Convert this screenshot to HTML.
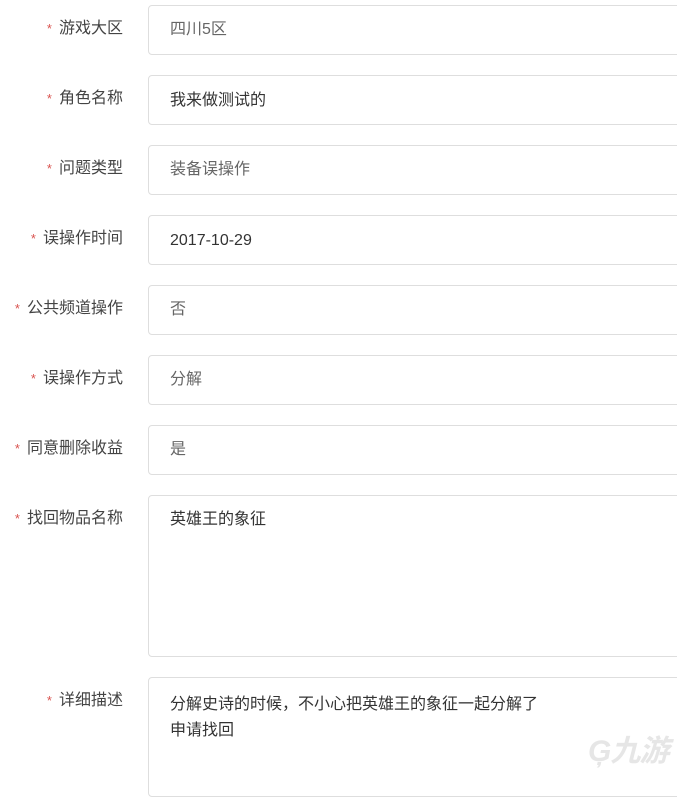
<!DOCTYPE html>
<html><head><meta charset="utf-8"><style>
body{margin:0;width:677px;height:774px;overflow:hidden;background:#fff;font-family:"Liberation Sans","Noto Sans CJK SC",sans-serif;font-size:16px;}
.l{position:absolute;right:554px;text-align:right;color:#444;white-space:nowrap;line-height:20px;font-size:16px}
.l span{color:#d9534f;margin-right:7px;font-size:13px}
.b{position:absolute;left:148px;width:560px;border:1px solid #dedede;border-radius:4px;box-sizing:border-box;padding-left:21px;color:#333;line-height:20px;font-size:16px}
.g{color:#666}
</style></head><body>
<div class="l" style="top:19px"><span>*</span>游戏大区</div>
<div class="b g" style="top:5px;height:50px;padding-top:14px">四川5区</div>
<div class="l" style="top:89px"><span>*</span>角色名称</div>
<div class="b" style="top:75px;height:50px;padding-top:15px">我来做测试的</div>
<div class="l" style="top:159px"><span>*</span>问题类型</div>
<div class="b g" style="top:145px;height:50px;padding-top:14px">装备误操作</div>
<div class="l" style="top:229px"><span>*</span>误操作时间</div>
<div class="b" style="top:215px;height:50px;padding-top:15px">2017-10-29</div>
<div class="l" style="top:299px"><span>*</span>公共频道操作</div>
<div class="b g" style="top:285px;height:50px;padding-top:14px">否</div>
<div class="l" style="top:369px"><span>*</span>误操作方式</div>
<div class="b g" style="top:355px;height:50px;padding-top:14px">分解</div>
<div class="l" style="top:439px"><span>*</span>同意删除收益</div>
<div class="b g" style="top:425px;height:50px;padding-top:14px">是</div>
<div class="l" style="top:509px"><span>*</span>找回物品名称</div>
<div class="b" style="top:495px;height:162px;padding-top:14px">英雄王的象征</div>
<div class="l" style="top:691px"><span>*</span>详细描述</div>
<div class="b" style="top:677px;height:120px;padding-top:14px;line-height:26px">分解史诗的时候，不小心把英雄王的象征一起分解了<br>申请找回</div>
<div style="position:absolute;left:588px;top:726px;color:#e6e6e6;font-size:30px;font-style:italic;font-weight:bold;letter-spacing:-1px">Ģ九游</div>
</body></html>
